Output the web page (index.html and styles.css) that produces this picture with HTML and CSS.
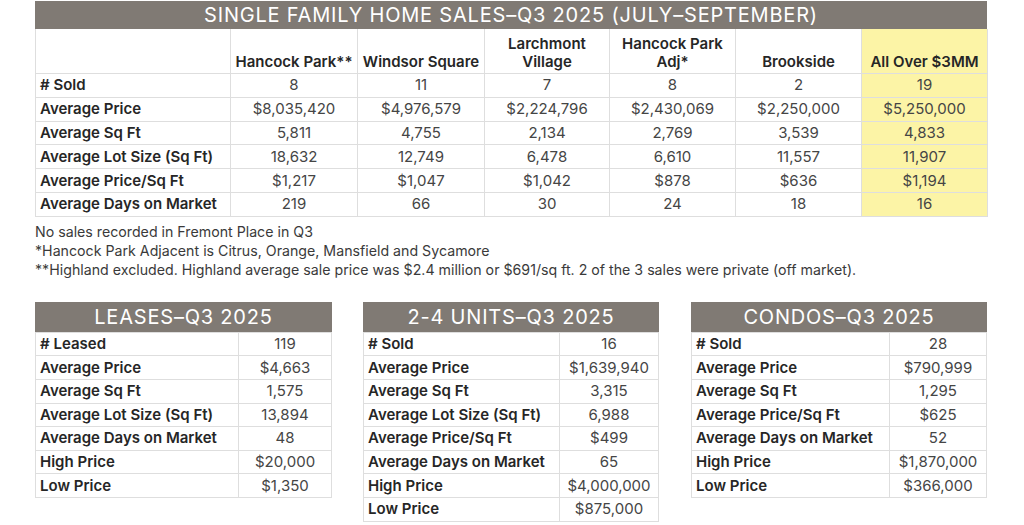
FILE: index.html
```html
<!DOCTYPE html>
<html>
<head>
<meta charset="utf-8">
<link rel="stylesheet" href="styles.css">
</head>
<body>
<div class="page">
  <section class="main">
    <div class="bar bar-main">SINGLE FAMILY HOME SALES–Q3 2025 (JULY–SEPTEMBER)</div>
    <table class="grid grid-main">
      <colgroup>
        <col class="c-label"><col class="c-a"><col class="c-a"><col class="c-b"><col class="c-c"><col class="c-c"><col class="c-c">
      </colgroup>
      <tr class="head">
        <th></th>
        <th>Hancock Park**</th>
        <th>Windsor Square</th>
        <th>Larchmont<br>Village</th>
        <th>Hancock Park<br>Adj*</th>
        <th>Brookside</th>
        <th class="hl">All Over $3MM</th>
      </tr>
      <tr><td class="lbl"># Sold</td><td>8</td><td>11</td><td>7</td><td>8</td><td>2</td><td class="hl">19</td></tr>
      <tr><td class="lbl">Average Price</td><td>$8,035,420</td><td>$4,976,579</td><td>$2,224,796</td><td>$2,430,069</td><td>$2,250,000</td><td class="hl">$5,250,000</td></tr>
      <tr><td class="lbl">Average Sq Ft</td><td>5,811</td><td>4,755</td><td>2,134</td><td>2,769</td><td>3,539</td><td class="hl">4,833</td></tr>
      <tr><td class="lbl">Average Lot Size (Sq Ft)</td><td>18,632</td><td>12,749</td><td>6,478</td><td>6,610</td><td>11,557</td><td class="hl">11,907</td></tr>
      <tr><td class="lbl">Average Price/Sq Ft</td><td>$1,217</td><td>$1,047</td><td>$1,042</td><td>$878</td><td>$636</td><td class="hl">$1,194</td></tr>
      <tr><td class="lbl">Average Days on Market</td><td>219</td><td>66</td><td>30</td><td>24</td><td>18</td><td class="hl">16</td></tr>
    </table>
    <div class="notes">
      <p>No sales recorded in Fremont Place in Q3</p>
      <p>*Hancock Park Adjacent is Citrus, Orange, Mansfield and Sycamore</p>
      <p>**Highland excluded. Highland average sale price was $2.4 million or $691/sq ft. 2 of the 3 sales were private (off market).</p>
    </div>
  </section>

  <section class="row">
    <div class="card card-lease">
      <div class="bar">LEASES–Q3 2025</div>
      <table class="grid">
        <tr><td class="lbl"># Leased</td><td>119</td></tr>
        <tr><td class="lbl">Average Price</td><td>$4,663</td></tr>
        <tr><td class="lbl">Average Sq Ft</td><td>1,575</td></tr>
        <tr><td class="lbl">Average Lot Size (Sq Ft)</td><td>13,894</td></tr>
        <tr><td class="lbl">Average Days on Market</td><td>48</td></tr>
        <tr><td class="lbl">High Price</td><td>$20,000</td></tr>
        <tr><td class="lbl">Low Price</td><td>$1,350</td></tr>
      </table>
    </div>
    <div class="card card-units">
      <div class="bar">2-4 UNITS–Q3 2025</div>
      <table class="grid">
        <tr><td class="lbl"># Sold</td><td>16</td></tr>
        <tr><td class="lbl">Average Price</td><td>$1,639,940</td></tr>
        <tr><td class="lbl">Average Sq Ft</td><td>3,315</td></tr>
        <tr><td class="lbl">Average Lot Size (Sq Ft)</td><td>6,988</td></tr>
        <tr><td class="lbl">Average Price/Sq Ft</td><td>$499</td></tr>
        <tr><td class="lbl">Average Days on Market</td><td>65</td></tr>
        <tr><td class="lbl">High Price</td><td>$4,000,000</td></tr>
        <tr><td class="lbl">Low Price</td><td>$875,000</td></tr>
      </table>
    </div>
    <div class="card card-condo">
      <div class="bar">CONDOS–Q3 2025</div>
      <table class="grid">
        <tr><td class="lbl"># Sold</td><td>28</td></tr>
        <tr><td class="lbl">Average Price</td><td>$790,999</td></tr>
        <tr><td class="lbl">Average Sq Ft</td><td>1,295</td></tr>
        <tr><td class="lbl">Average Price/Sq Ft</td><td>$625</td></tr>
        <tr><td class="lbl">Average Days on Market</td><td>52</td></tr>
        <tr><td class="lbl">High Price</td><td>$1,870,000</td></tr>
        <tr><td class="lbl">Low Price</td><td>$366,000</td></tr>
      </table>
    </div>
  </section>
</div>
</body>
</html>
```

FILE: styles.css
```css
html, body {
  margin: 0;
  padding: 0;
  background: #ffffff;
}
body {
  font-family: Inter, "Liberation Sans", Arial, sans-serif;
  color: #3a3a3a;
  width: 1024px;
  height: 525px;
  overflow: hidden;
}
.page {
  padding: 1px 0 0 35px;
}
.main {
  width: 952px;
}
.bar {
  background: #807a74;
  color: #ffffff;
  text-align: center;
  font-size: 20px;
  height: 28px;
  line-height: 29px;
  letter-spacing: 0.8px;
}
.grid {
  border-collapse: collapse;
  table-layout: fixed;
  width: 100%;
}
.grid td, .grid th {
  border: 1px solid #dedede;
  padding: 0 4px;
  height: 22.8px;
  font-size: 15px;
  line-height: 18px;
  text-align: center;
  font-weight: 400;
  color: #454545;
  white-space: nowrap;
}
.grid td.lbl {
  text-align: left;
  font-weight: 600;
  color: #262626;
}
.grid tr.head th {
  height: 42px;
  vertical-align: bottom;
  font-weight: 600;
  color: #262626;
  padding-bottom: 2px;
}
.grid .hl {
  background: #fcf4a6;
}
.grid-main tr:first-child th {
  border-top: none;
}
.c-label { width: 195px; }
.c-a { width: 127px; }
.c-b { width: 125px; }
.c-c { width: 126px; }
.notes {
  padding-top: 5px;
  font-size: 14.2px;
  line-height: 19px;
  color: #3a3a3a;
}
.notes p {
  margin: 0;
}
.row {
  display: flex;
  gap: 31px;
  margin-top: 23px;
  align-items: flex-start;
}
.card-lease { width: 297px; }
.card-units { width: 296px; }
.card-condo { width: 296px; margin-left: 1px; }
.card .bar { height: 30px; line-height: 30px; }
.card .grid td { height: 22.6px; }
.card-lease .grid td.lbl { width: 194px; }
.card-units .grid td.lbl { width: 187px; }
.card-condo .grid td.lbl { width: 189px; }
```
